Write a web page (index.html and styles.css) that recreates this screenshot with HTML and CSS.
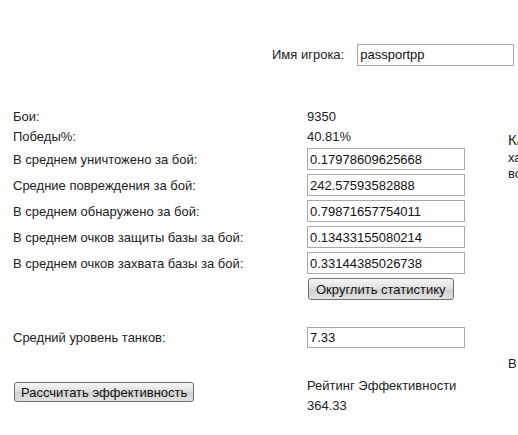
FILE: index.html
```html
<!DOCTYPE html>
<html lang="ru">
<head>
  <meta charset="UTF-8" />
  <title>Рейтинг эффективности</title>
  <link rel="stylesheet" href="styles.css">
</head>
<body>

<div class="page">

  <!-- Player name -->
  <div class="player">
    <label for="nick">Имя игрока:</label>
    <input type="text" id="nick" value="passportpp" />
  </div>

  <div class="main">
    <div class="stats">
      <div class="row text-row">
        <span class="label">Бои:</span>
        <span class="value">9350</span>
      </div>
      <div class="row text-row">
        <span class="label">Победы%:</span>
        <span class="value">40.81%</span>
      </div>
      <div class="row field-row">
        <span class="label">В среднем уничтожено за бой:</span>
        <input type="text" value="0.17978609625668" />
      </div>
      <div class="row field-row">
        <span class="label">Средние повреждения за бой:</span>
        <input type="text" value="242.57593582888" />
      </div>
      <div class="row field-row">
        <span class="label">В среднем обнаружено за бой:</span>
        <input type="text" value="0.79871657754011" />
      </div>
      <div class="row field-row">
        <span class="label">В среднем очков защиты базы за бой:</span>
        <input type="text" value="0.13433155080214" />
      </div>
      <div class="row field-row">
        <span class="label">В среднем очков захвата базы за бой:</span>
        <input type="text" value="0.33144385026738" />
      </div>
      <div class="row round-row">
        <span class="label"></span>
        <button class="btn">Округлить статистику</button>
      </div>

      <div class="row field-row tier-row">
        <span class="label">Средний уровень танков:</span>
        <input type="text" value="7.33" />
      </div>

      <div class="row result-row">
        <span class="label"><button class="btn btn-calc">Рассчитать эффективность</button></span>
        <div class="result">
          <div>Рейтинг Эффективности</div>
          <div>364.33</div>
        </div>
      </div>
    </div>

    <!-- Help text on the right -->
    <div class="side">
      <p class="intro"><span class="cap">К</span>алькулятор рейтинга<br>характеризует<br>возможности игрока</p>
      <p class="note">В рейтинге учитывается</p>
    </div>
  </div>

</div>

</body>
</html>
```

FILE: styles.css
```css
html, body {
  margin: 0;
  overflow: hidden;
}

body {
  font-family: Arial, 'Liberation Sans', sans-serif;
  font-size: 13px;
  color: #222;
  background: #fff;
}

.page {
  width: 700px;
  padding-top: 44px;
}

.player {
  display: flex;
  align-items: center;
  gap: 13px;
  padding-left: 272px;
  height: 21px;
}

input[type="text"] {
  box-sizing: border-box;
  font-family: Arial, 'Liberation Sans', sans-serif;
  font-size: 13px;
  color: #111;
  border: 1px solid #a9a9a9;
  padding: 0 2px;
  margin: 0;
  height: 22px;
  width: 158px;
  background: #fff;
}

.player input {
  width: 157px;
}

.main {
  display: flex;
  margin-top: 42px;
}

.stats {
  width: 465px;
  padding-left: 13px;
  box-sizing: border-box;
}

.row {
  display: flex;
  align-items: center;
}

.label {
  width: 294px;
  flex: none;
}

.text-row {
  height: 19px;
}

.text-row + .text-row {
  margin-top: 1px;
}

.text-row + .field-row {
  margin-top: 2px;
}

.field-row {
  height: 22px;
  margin-bottom: 4px;
}

.round-row {
  margin-top: 1px;
  height: 22px;
}

.round-row .btn {
  margin-left: 1px;
}

.tier-row {
  margin-top: 27px;
  height: 21px;
}

.tier-row input {
  height: 21px;
}

.btn {
  font-family: Arial, 'Liberation Sans', sans-serif;
  font-size: 13px;
  color: #111;
  height: 22px;
  padding: 0 7px;
  border: 1px solid #707070;
  border-radius: 3px;
  background: linear-gradient(#f6f6f6, #dedede 50%, #d0d0d0 51%, #e2e2e2);
  cursor: pointer;
}

.result-row {
  align-items: flex-start;
  margin-top: 27px;
}

.btn-calc {
  height: 20px;
  margin-left: 1px;
  margin-top: 7px;
  padding: 0 6px;
}

.result div {
  height: 20px;
  line-height: 20px;
}

.result div:first-child {
  margin-top: 1px;
}

.side {
  padding-left: 43px;
  white-space: nowrap;
}

.intro {
  margin: 22px 0 0;
  font-size: 13px;
  line-height: 16px;
}

.cap {
  font-size: 15px;
  line-height: 21px;
}

.note {
  margin: 174px 0 0;
}
```
